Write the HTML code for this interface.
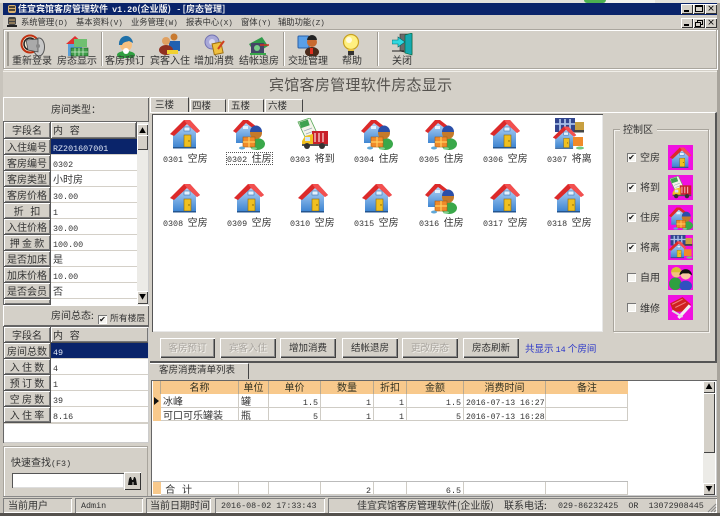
<!DOCTYPE html>
<html><head><meta charset="utf-8"><style>
html,body{margin:0;padding:0;width:720px;height:516px;overflow:hidden;background:#d4d0c8}
*{box-sizing:border-box}
body{position:relative;font-family:"Noto Sans CJK SC","WenQuanYi Zen Hei",sans-serif;font-size:10px;color:#333;line-height:1;filter:blur(.3px)}
div,span.a,svg.a{position:absolute}
.t{white-space:nowrap}
.m{font-family:"Liberation Mono",monospace;font-size:8.4px}
.r{box-shadow:inset 1px 1px 0 #fff,inset -1px -1px 0 #666;background:#d4d0c8}
.s{box-shadow:inset 1px 1px 0 #808080,inset -1px -1px 0 #fff;background:#d4d0c8}
.h{background:#d4d0c8;box-shadow:inset 1px 1px 0 #fff,inset -1px -1px 0 #777;text-align:center;padding-top:3px;white-space:nowrap;border-right:1px solid #555;border-bottom:1px solid #555}
.v{background:#fff;padding:3px 0 0 2px;white-space:nowrap;border-bottom:1px solid #d4d0c8}
.sel{background:#0a246a;color:#dfe6f5}
.o{background:#f8c98c;text-align:center;padding-top:1px;border-right:1px solid #b9a98f;height:13px;top:381px;color:#332}
.g{background:#fff;white-space:nowrap;padding:2px 2px 0;height:14px;border-right:1px solid #cfccc5;border-bottom:1px solid #cfccc5;color:#333}
.ri{text-align:right}
.btn{top:338px;height:20px;background:#d4d0c8;box-shadow:inset 1px 1px 0 #fff,inset -1px -1px 0 #404040,inset -2px -2px 0 #888;text-align:center;padding-top:5px;white-space:nowrap;font-size:9.5px}
.dis{color:#aaa6a0;text-shadow:1px 1px 0 #f4f2ee}
.cb{width:9px;height:9px;background:#f5f4f0;box-shadow:inset 1px 1px 0 #777,inset -1px -1px 0 #fff;font-size:8px;line-height:9px;text-align:center;color:#111}
.mg{width:25px;height:25px;background:#f010e0;left:668px}
.sb{width:10px;height:10px;background:#d4d0c8;box-shadow:inset 1px 1px 0 #fff,inset -1px -1px 0 #444}
.cap{width:12px;height:10px;top:4px;background:#d4d0c8;box-shadow:inset 1px 1px 0 #fff,inset -1px -1px 0 #333;font-size:8px;line-height:10px;text-align:center;color:#000}
.cap i{position:absolute;display:block}
</style></head><body>
<svg width="0" height="0" style="position:absolute"><defs>
<linearGradient id="w" x1="0" y1="0" x2="0" y2="1"><stop offset="0" stop-color="#b8d8f8"/><stop offset="1" stop-color="#3f86d2"/></linearGradient>
<symbol id="house" viewBox="0 0 32 32"><polygon points="4,14 18,5 27,14 27,29 4,29" fill="url(#w)"/><polygon points="1,16 15,2 21,2 31,13 28,15 18,6 5,18" fill="#dc2a2a"/><polygon points="15,2 21,2 31,13 28,15 18,6" fill="#f25050"/><rect x="15" y="9" width="6" height="4" fill="#e4f2ff" stroke="#3a70b0" stroke-width=".6"/><rect x="15" y="17" width="7" height="12" fill="#f0c020" stroke="#8a6a10" stroke-width=".6"/><circle cx="20" cy="23" r=".7" fill="#7a5a00"/><rect x="4" y="29" width="23" height="1.5" fill="#24558f"/></symbol>
<symbol id="guest" viewBox="0 0 32 32"><polygon points="3,12 13,4 22,11 22,25 3,25" fill="url(#w)"/><polygon points="0,13 10,2 15,2 24,9 21,11 13,5 3,15" fill="#dc2a2a"/><rect x="10" y="8" width="5" height="3" fill="#e4f2ff"/><ellipse cx="24" cy="26" rx="8" ry="6" fill="#3aa84a"/><circle cx="23" cy="15" r="6" fill="#c47a2a"/><path d="M17,14a6,6.500 0 0 1 12,0z" fill="#2b4fa8"/><rect x="10" y="19" width="12" height="10" fill="#f08a2a" stroke="#a85a10" stroke-width=".6"/><path d="M16,19v10M10,24h12" stroke="#ffd060" stroke-width="1.2"/><ellipse cx="9" cy="30" rx="3" ry="1.500" fill="#60a8d8"/><ellipse cx="21" cy="30.500" rx="3" ry="1.200" fill="#80d090"/></symbol>
<symbol id="truck" viewBox="0 0 32 32"><polygon points="1,4 13,0 20,15 8,19" fill="#f4f4ea" stroke="#58a858" stroke-width=".8"/><rect x="3" y="3" width="9" height="6" fill="#3fa24f" transform="rotate(-18 7 6)"/><path d="M7,13l8,-3M9,16l8,-3" stroke="#9ab" stroke-width=".8"/><rect x="15" y="13" width="16" height="13" fill="#c8202a"/><path d="M18,15v9M22,15v9M26,15v9" stroke="#f6d0d0" stroke-width="1.300"/><polygon points="8,18 16,16 16,28 5,28 5,23" fill="#f0c020"/><rect x="8" y="19" width="5" height="4" fill="#cfe4f8"/><rect x="5" y="26" width="26" height="2" fill="#555"/><circle cx="10" cy="28" r="3" fill="#333"/><circle cx="25" cy="28" r="3" fill="#333"/></symbol>
<symbol id="leave" viewBox="0 0 32 32"><rect x="2" y="0" width="20" height="14" fill="#32458e"/><path d="M7,1v12M12,1v12M17,1v12M2,6h20" stroke="#a8c0e8" stroke-width="1.800"/><rect x="22" y="4" width="9" height="9" fill="#c8a040"/><rect x="21" y="12" width="10" height="2.500" fill="#444"/><use href="#house" x="-1" y="7" width="25" height="25"/><rect x="20" y="19" width="10" height="9" fill="#f08a2a"/><ellipse cx="27" cy="30" rx="4" ry="1.500" fill="#70c880"/></symbol>
<symbol id="self" viewBox="0 0 24 24"><circle cx="8" cy="7" r="5" fill="#f4c080"/><path d="M3,7a5,5 0 0 1 10,0z" fill="#d8c030"/><ellipse cx="7" cy="18" rx="6" ry="6" fill="#2fa040"/><circle cx="17" cy="9" r="5" fill="#f6c8a0"/><path d="M11,10a6,6 0 0 1 12,0l-3,-2h-6z" fill="#111"/><ellipse cx="17" cy="20" rx="6" ry="5" fill="#3050c0"/></symbol>
<symbol id="fix" viewBox="0 0 24 24"><polygon points="2,8 14,2 22,9 14,16 5,16" fill="#d02020"/><path d="M4,9l10,-5M7,12l10,-5" stroke="#f08080"/><path d="M10,22L21,10" stroke="#f0f0f0" stroke-width="3"/><path d="M4,15l10,6" stroke="#e0e0e0" stroke-width="2"/></symbol>
</defs></svg>

<!-- top strip / title -->
<div style="left:0;top:0;width:720px;height:3px;background:#e4e2dc"></div>
<div style="left:585px;top:0;width:70px;height:3px;background:#f2f2ee"></div>
<div style="left:584px;top:0;width:22px;height:3px;background:#4cb050;border-radius:0 0 10px 10px"></div>
<div style="left:0;top:3px;width:3px;height:513px;background:#c8c4bc"></div>
<div style="left:717px;top:3px;width:3px;height:513px;background:#a8a49c"></div>
<div style="left:3px;top:3px;width:714px;height:12px;background:#0a246a"></div>
<svg class="a" style="left:7px;top:4px" width="10" height="10" viewBox="0 0 10 10"><rect x="1" y="1" width="8" height="8" rx="2" fill="#d8b070"/><path d="M2,3h6M2,6h6" stroke="#222" stroke-width="1.400"/></svg>
<div class="t" style="left:18px;top:4px;color:#f2f2f2;font-weight:bold;font-size:9px">佳宜宾馆客房管理软件&nbsp; <span class="m" style="font-weight:bold">v1.20</span>(企业版)&nbsp;&nbsp; - [房态管理]</div>
<div class="cap" style="left:681px"><i style="left:3px;top:6px;width:5px;height:2px;background:#000"></i></div>
<div class="cap" style="left:693px"><i style="left:2px;top:1px;width:8px;height:7px;border:1px solid #000;border-top-width:2px"></i></div>
<div class="cap" style="left:705px;font-weight:bold">×</div>

<!-- menu -->
<svg class="a" style="left:6px;top:16px" width="12" height="12" viewBox="0 0 12 12"><rect x="2" y="1" width="8" height="8" rx="2" fill="#444"/><path d="M3,4h6M3,7h6" stroke="#d8b070"/><rect x="1" y="9" width="10" height="2" fill="#222"/></svg>
<div class="t" style="left:21px;top:18px;font-size:8.3px">系统管理<span class="m" style="font-size:7.5px">(D)</span></div>
<div class="t" style="left:76px;top:18px;font-size:8.3px">基本资料<span class="m" style="font-size:7.5px">(V)</span></div>
<div class="t" style="left:131px;top:18px;font-size:8.3px">业务管理<span class="m" style="font-size:7.5px">(W)</span></div>
<div class="t" style="left:186px;top:18px;font-size:8.3px">报表中心<span class="m" style="font-size:7.5px">(X)</span></div>
<div class="t" style="left:241px;top:18px;font-size:8.3px">窗体<span class="m" style="font-size:7.5px">(Y)</span></div>
<div class="t" style="left:278px;top:18px;font-size:8.3px">辅助功能<span class="m" style="font-size:7.5px">(Z)</span></div>
<div class="cap" style="left:681px;top:18px"><i style="left:3px;top:6px;width:5px;height:2px;background:#000"></i></div>
<div class="cap" style="left:693px;top:18px"><i style="left:4px;top:2px;width:6px;height:5px;border:1px solid #000"></i><i style="left:2px;top:4px;width:6px;height:5px;border:1px solid #000;background:#d4d0c8"></i></div>
<div class="cap" style="left:705px;top:18px;font-weight:bold">×</div>

<!-- toolbar -->
<div style="left:3px;top:29px;width:714px;height:40px;border:1px solid #aaa69e;box-shadow:inset 1px 1px 0 #fff,1px 1px 0 #fff"></div>
<div style="left:7px;top:32px;width:2px;height:34px;background:#a09c94"></div>
<div style="left:101px;top:32px;width:2px;height:34px;background:#a09c94;border-right:1px solid #fff"></div>
<div style="left:283px;top:32px;width:2px;height:34px;background:#a09c94;border-right:1px solid #fff"></div>
<div style="left:377px;top:32px;width:2px;height:34px;background:#a09c94;border-right:1px solid #fff"></div>
<svg class="a" style="left:20px;top:33px" width="26" height="24" viewBox="0 0 26 24"><circle cx="10" cy="11" r="8.500" fill="#f4e8d0" stroke="#c03010" stroke-width="2"/><circle cx="10" cy="11" r="6" fill="none" stroke="#222" stroke-width="1.500"/><ellipse cx="19" cy="14" rx="5.500" ry="9" fill="#c8c8c8" stroke="#555"/><polygon points="6,7 18,6 18,19 8,17" fill="#aaa" stroke="#444" stroke-width=".7"/><circle cx="18" cy="13" r="2" fill="#888"/></svg>
<svg class="a" style="left:65px;top:35px" width="24" height="22" viewBox="0 0 24 22"><polygon points="1,9 10,1 19,9" fill="#e03030"/><rect x="3" y="9" width="14" height="12" fill="#5aa0d8"/><rect x="9" y="4" width="13" height="8" fill="#70c070"/><rect x="6" y="13" width="17" height="8" fill="#3f9c48" stroke="#1d5c24" stroke-width=".6"/><path d="M10,13v8M14,13v8M18,13v8M6,17h17" stroke="#cfeccf" stroke-width=".8"/></svg>
<svg class="a" style="left:116px;top:34px" width="20" height="24" viewBox="0 0 20 24"><ellipse cx="10" cy="21" rx="9" ry="4" fill="#2fa040"/><circle cx="10" cy="11" r="6" fill="#f6c080"/><path d="M3,11a7,8 0 0 1 14,-2l-4,-2c-3,1 -6,1 -7,4z" fill="#1f70a8"/><circle cx="10" cy="17" r="3" fill="#fff"/></svg>
<svg class="a" style="left:159px;top:33px" width="22" height="22" viewBox="0 0 22 22"><circle cx="15" cy="4" r="3.500" fill="#c87a30"/><rect x="10" y="8" width="11" height="10" fill="#2060b0"/><circle cx="7" cy="8" r="4" fill="#e0a060"/><ellipse cx="7" cy="17" rx="7" ry="5" fill="#903020"/><rect x="8" y="17" width="11" height="4" fill="#f0d030"/></svg>
<svg class="a" style="left:204px;top:34px" width="22" height="22" viewBox="0 0 22 22"><circle cx="8" cy="8" r="7" fill="#a8a8d8" stroke="#7070b0"/><circle cx="8" cy="8" r="3" fill="#d8d8f0"/><rect x="9" y="9" width="9" height="11" fill="#f0c040" stroke="#a07010" transform="rotate(-12 13 14)"/><path d="M14,15l6,-8" stroke="#d04020" stroke-width="2"/></svg>
<svg class="a" style="left:248px;top:36px" width="22" height="20" viewBox="0 0 22 20"><polygon points="1,8 14,1 20,10 7,18" fill="#2f9a4a"/><rect x="3" y="7" width="13" height="10" fill="#446"/><circle cx="9" cy="12" r="3" fill="#7c8"/><path d="M12,9h9" stroke="#d03020" stroke-width="1.500"/><rect x="2" y="17" width="16" height="2" fill="#3aa84a"/></svg>
<svg class="a" style="left:297px;top:34px" width="24" height="22" viewBox="0 0 24 22"><rect x="1" y="2" width="11" height="12" rx="1" fill="#5aa0e8" stroke="#2a60a8"/><ellipse cx="15" cy="18" rx="7" ry="5" fill="#4a2a1a"/><circle cx="15" cy="8" r="5" fill="#c86a30"/><path d="M10,6a5,5 0 0 1 10,0z" fill="#222"/><rect x="13" y="14" width="3" height="6" fill="#e03020"/></svg>
<svg class="a" style="left:342px;top:33px" width="18" height="24" viewBox="0 0 18 24"><circle cx="9" cy="9" r="7.500" fill="#fff080" stroke="#c8a020" stroke-width="1.200"/><circle cx="7" cy="7" r="3" fill="#fffbe0"/><rect x="6" y="16" width="6" height="2" fill="#e8c040"/><rect x="6" y="18" width="6" height="4" fill="#333"/></svg>
<svg class="a" style="left:392px;top:33px" width="21" height="23" viewBox="0 0 21 23"><polygon points="8,1 20,1 20,21 8,18" fill="#6a6a6a" stroke="#333" stroke-width=".6"/><polygon points="13,2 20,0 20,22 13,20" fill="#16a8b0" stroke="#063" stroke-width=".6"/><path d="M0,18h12" stroke="#222"/><polygon points="0,7 6,7 6,4 13,9 6,14 6,11 0,11" fill="#30d8e0" stroke="#066" stroke-width=".6"/></svg>
<div class="t" style="left:12px;top:55px">重新登录</div>
<div class="t" style="left:57px;top:55px">房态显示</div>
<div class="t" style="left:105px;top:55px">客房预订</div>
<div class="t" style="left:150px;top:55px">宾客入住</div>
<div class="t" style="left:194px;top:55px">增加消费</div>
<div class="t" style="left:239px;top:55px">结帐退房</div>
<div class="t" style="left:288px;top:55px">交班管理</div>
<div class="t" style="left:342px;top:55px">帮助</div>
<div class="t" style="left:392px;top:55px">关闭</div>
<div style="left:3px;top:71px;width:714px;height:1px;background:#f0eee8"></div>
<div class="t" style="left:269px;top:77px;font-size:15px;letter-spacing:.28px;color:#55524e">宾馆客房管理软件房态显示</div>

<!-- left panel 1 -->
<div class="r" style="left:3px;top:97px;width:146px;height:25px"></div>
<div class="t" style="left:51px;top:104px">房间类型：</div>
<div style="left:3px;top:121px;width:146px;height:184px;background:#fff;box-shadow:inset 1px 1px 0 #666,inset -1px 0 0 #ccc"></div>
<div class="h" style="left:4px;top:122px;width:47px;height:17px">字段名</div><div class="h" style="left:51px;top:122px;width:86px;height:17px;text-align:left;padding-left:2px">内&nbsp;&nbsp;&nbsp;容</div>
<div class="h" style="left:4px;top:139px;width:47px;height:16px">入住编号</div><div class="v sel" style="left:51px;top:139px;width:86px;height:16px"><span class="m">RZ201607001</span></div>
<div class="h" style="left:4px;top:155px;width:47px;height:16px">客房编号</div><div class="v" style="left:51px;top:155px;width:86px;height:16px"><span class="m">0302</span></div>
<div class="h" style="left:4px;top:171px;width:47px;height:16px">客房类型</div><div class="v" style="left:51px;top:171px;width:86px;height:16px">小时房</div>
<div class="h" style="left:4px;top:187px;width:47px;height:16px">客房价格</div><div class="v" style="left:51px;top:187px;width:86px;height:16px"><span class="m">30.00</span></div>
<div class="h" style="left:4px;top:203px;width:47px;height:16px">折&nbsp;&nbsp;&nbsp;扣</div><div class="v" style="left:51px;top:203px;width:86px;height:16px"><span class="m">1</span></div>
<div class="h" style="left:4px;top:219px;width:47px;height:16px">入住价格</div><div class="v" style="left:51px;top:219px;width:86px;height:16px"><span class="m">30.00</span></div>
<div class="h" style="left:4px;top:235px;width:47px;height:16px">押 金 款</div><div class="v" style="left:51px;top:235px;width:86px;height:16px"><span class="m">100.00</span></div>
<div class="h" style="left:4px;top:251px;width:47px;height:16px">是否加床</div><div class="v" style="left:51px;top:251px;width:86px;height:16px">是</div>
<div class="h" style="left:4px;top:267px;width:47px;height:16px">加床价格</div><div class="v" style="left:51px;top:267px;width:86px;height:16px"><span class="m">10.00</span></div>
<div class="h" style="left:4px;top:283px;width:47px;height:16px">是否会员</div><div class="v" style="left:51px;top:283px;width:86px;height:16px">否</div>
<div class="h" style="left:4px;top:299px;width:47px;height:6px;padding:0"></div>
<div style="left:137px;top:122px;width:11px;height:183px;background:#ecebe7"></div>
<div class="sb" style="left:137px;top:124px;width:11px;height:14px;font-size:7px;text-align:center;line-height:14px;color:#000">▲</div>
<div class="sb" style="left:137px;top:135px;width:11px;height:15px"></div>
<div class="sb" style="left:137px;top:291px;width:11px;height:13px;font-size:7px;text-align:center;line-height:13px;color:#000">▼</div>

<!-- left panel 2 -->
<div class="r" style="left:3px;top:305px;width:146px;height:21px"></div>
<div class="t" style="left:51px;top:310px">房间总态:</div>
<div class="cb" style="left:98px;top:315px">✔</div>
<div class="t" style="left:110px;top:314px;font-size:8.8px">所有楼层</div>
<div style="left:3px;top:326px;width:146px;height:117px;background:#fff;box-shadow:inset 1px 1px 0 #666,inset -1px -1px 0 #ccc"></div>
<div class="h" style="left:4px;top:327px;width:47px;height:16px">字段名</div><div class="h" style="left:51px;top:327px;width:97px;height:16px;text-align:left;padding-left:2px;border-right:0">内&nbsp;&nbsp;&nbsp;容</div>
<div class="h" style="left:4px;top:343px;width:47px;height:16px">房间总数</div><div class="v sel" style="left:51px;top:343px;width:97px;height:16px"><span class="m">49</span></div>
<div class="h" style="left:4px;top:359px;width:47px;height:16px">入 住 数</div><div class="v" style="left:51px;top:359px;width:97px;height:16px"><span class="m">4</span></div>
<div class="h" style="left:4px;top:375px;width:47px;height:16px">预 订 数</div><div class="v" style="left:51px;top:375px;width:97px;height:16px"><span class="m">1</span></div>
<div class="h" style="left:4px;top:391px;width:47px;height:16px">空 房 数</div><div class="v" style="left:51px;top:391px;width:97px;height:16px"><span class="m">39</span></div>
<div class="h" style="left:4px;top:407px;width:47px;height:16px">入 住 率</div><div class="v" style="left:51px;top:407px;width:97px;height:16px"><span class="m">8.16</span></div>
<div style="left:4px;top:423px;width:144px;height:1px;background:#d4d0c8"></div>

<div style="left:3px;top:446px;width:145px;height:51px;border:1px solid #a8a49c;box-shadow:inset 1px 1px 0 #fff"></div>
<div class="t" style="left:11px;top:457px">快速查找<span class="m">(F3)</span></div>
<div style="left:12px;top:473px;width:112px;height:15px;background:#fff;box-shadow:inset 1px 1px 0 #555,inset -1px -1px 0 #ddd"></div>
<div class="r" style="left:124px;top:472px;width:17px;height:18px;box-shadow:inset 1px 1px 0 #fff,inset -1px -1px 0 #333"></div>
<svg class="a" style="left:127px;top:476px" width="11" height="10" viewBox="0 0 11 10"><path d="M1,9l1,-6 1,-2h1l1,3h1l1,-3h1l1,2 1,6h-3.500v-3h-1v3z" fill="#111"/></svg>

<!-- tabs -->
<div style="left:150px;top:97px;width:39px;height:16px;background:#d4d0c8;border-top:1px solid #fff;border-left:1px solid #fff;border-right:1px solid #444"></div>
<div class="t" style="left:155px;top:100px;font-size:9.5px">三楼</div>
<div style="left:190px;top:99px;width:36px;height:14px;border-top:1px solid #fff;border-left:1px solid #fff;border-right:1px solid #444"></div><div class="t" style="left:192px;top:101px;font-size:9.5px">四楼</div>
<div style="left:228px;top:99px;width:36px;height:14px;border-top:1px solid #fff;border-left:1px solid #fff;border-right:1px solid #444"></div><div class="t" style="left:231px;top:101px;font-size:9.5px">五楼</div>
<div style="left:265px;top:99px;width:38px;height:14px;border-top:1px solid #fff;border-left:1px solid #fff;border-right:1px solid #444"></div><div class="t" style="left:268px;top:101px;font-size:9.5px">六楼</div>

<!-- main frame -->
<div style="left:150px;top:112px;width:567px;height:251px;border-right:2px solid #555;border-bottom:2px solid #555;border-top:1px solid #fff"></div>
<div style="left:152px;top:114px;width:451px;height:218px;background:#fff;box-shadow:inset 1px 1px 0 #555,inset -1px -1px 0 #e8e8e8"></div>

<!-- rooms -->
<svg class="a" style="left:169px;top:118px" width="32" height="32"><use href="#house" width="32" height="32"/></svg><div class="t" style="left:163px;top:153px"><span class="m">0301</span>&nbsp;&nbsp;空房</div>
<div style="left:226px;top:152px;width:47px;height:13px;border:1px dotted #555"></div>
<svg class="a" style="left:233px;top:118px" width="32" height="32"><use href="#guest" width="32" height="32"/></svg><div class="t" style="left:227px;top:153px"><span class="m">0302</span>&nbsp;&nbsp;住房</div>
<svg class="a" style="left:297px;top:118px" width="32" height="32"><use href="#truck" width="32" height="32"/></svg><div class="t" style="left:290px;top:153px"><span class="m">0303</span>&nbsp;&nbsp;将到</div>
<svg class="a" style="left:361px;top:118px" width="32" height="32"><use href="#guest" width="32" height="32"/></svg><div class="t" style="left:354px;top:153px"><span class="m">0304</span>&nbsp;&nbsp;住房</div>
<svg class="a" style="left:425px;top:118px" width="32" height="32"><use href="#guest" width="32" height="32"/></svg><div class="t" style="left:419px;top:153px"><span class="m">0305</span>&nbsp;&nbsp;住房</div>
<svg class="a" style="left:489px;top:118px" width="32" height="32"><use href="#house" width="32" height="32"/></svg><div class="t" style="left:483px;top:153px"><span class="m">0306</span>&nbsp;&nbsp;空房</div>
<svg class="a" style="left:553px;top:118px" width="32" height="32"><use href="#leave" width="32" height="32"/></svg><div class="t" style="left:547px;top:153px"><span class="m">0307</span>&nbsp;&nbsp;将离</div>

<svg class="a" style="left:169px;top:182px" width="32" height="32"><use href="#house" width="32" height="32"/></svg><div class="t" style="left:163px;top:217px"><span class="m">0308</span>&nbsp;&nbsp;空房</div>
<svg class="a" style="left:233px;top:182px" width="32" height="32"><use href="#house" width="32" height="32"/></svg><div class="t" style="left:227px;top:217px"><span class="m">0309</span>&nbsp;&nbsp;空房</div>
<svg class="a" style="left:297px;top:182px" width="32" height="32"><use href="#house" width="32" height="32"/></svg><div class="t" style="left:290px;top:217px"><span class="m">0310</span>&nbsp;&nbsp;空房</div>
<svg class="a" style="left:361px;top:182px" width="32" height="32"><use href="#house" width="32" height="32"/></svg><div class="t" style="left:354px;top:217px"><span class="m">0315</span>&nbsp;&nbsp;空房</div>
<svg class="a" style="left:425px;top:182px" width="32" height="32"><use href="#guest" width="32" height="32"/></svg><div class="t" style="left:419px;top:217px"><span class="m">0316</span>&nbsp;&nbsp;住房</div>
<svg class="a" style="left:489px;top:182px" width="32" height="32"><use href="#house" width="32" height="32"/></svg><div class="t" style="left:483px;top:217px"><span class="m">0317</span>&nbsp;&nbsp;空房</div>
<svg class="a" style="left:553px;top:182px" width="32" height="32"><use href="#house" width="32" height="32"/></svg><div class="t" style="left:547px;top:217px"><span class="m">0318</span>&nbsp;&nbsp;空房</div>

<!-- control -->
<div style="left:613px;top:129px;width:96px;height:203px;border:1px solid #a8a49c;box-shadow:inset 1px 1px 0 #f4f2ee,1px 1px 0 #f4f2ee"></div>
<div class="t" style="left:620px;top:123px;background:#d4d0c8;padding:0 4px 0 3px;height:12px;line-height:12px">控制区</div>
<div class="cb" style="left:627px;top:153px">✔</div><div class="t" style="left:640px;top:152px">空房</div><div class="mg" style="top:145px"><svg width="25" height="25" style="display:block"><use href="#house" x="1" y="1" width="23" height="23"/></svg></div>
<div class="cb" style="left:627px;top:183px">✔</div><div class="t" style="left:640px;top:182px">将到</div><div class="mg" style="top:175px"><svg width="25" height="25" style="display:block"><use href="#truck" x="1" y="1" width="23" height="23"/></svg></div>
<div class="cb" style="left:627px;top:213px">✔</div><div class="t" style="left:640px;top:212px">住房</div><div class="mg" style="top:205px"><svg width="25" height="25" style="display:block"><use href="#guest" x="1" y="1" width="24" height="24"/></svg></div>
<div class="cb" style="left:627px;top:243px">✔</div><div class="t" style="left:640px;top:242px">将离</div><div class="mg" style="top:235px"><svg width="25" height="25" style="display:block"><use href="#leave" x="1" y="0" width="24" height="24"/></svg></div>
<div class="cb" style="left:627px;top:273px"></div><div class="t" style="left:640px;top:272px">自用</div><div class="mg" style="top:265px"><svg width="25" height="25" style="display:block"><use href="#self" width="25" height="25"/></svg></div>
<div class="cb" style="left:627px;top:303px"></div><div class="t" style="left:640px;top:303px">维修</div><div class="mg" style="top:295px"><svg width="25" height="25" style="display:block"><use href="#fix" width="25" height="25"/></svg></div>

<!-- buttons -->
<div class="btn dis" style="left:160px;width:55px">客房预订</div>
<div class="btn dis" style="left:220px;width:56px">宾客入住</div>
<div class="btn" style="left:280px;width:56px">增加消费</div>
<div class="btn" style="left:342px;width:56px">结帐退房</div>
<div class="btn dis" style="left:402px;width:56px">更改房态</div>
<div class="btn" style="left:463px;width:56px">房态刷新</div>
<div class="t" style="left:525px;top:344px;color:#2a36c8;font-size:9.5px">共显示&nbsp;<span class="m">14</span>&nbsp;个房间</div>

<!-- bottom tab -->
<div style="left:150px;top:363px;width:99px;height:16px;border-top:1px solid #fff;border-right:1px solid #444"></div>
<div class="t" style="left:159px;top:365px;font-size:9.5px">客房消费清单列表</div>

<!-- bottom grid -->
<div style="left:151px;top:380px;width:566px;height:116px;background:#fff;box-shadow:inset 1px 1px 0 #666,inset -1px -1px 0 #ccc"></div>
<div class="o" style="left:153px;width:8px"></div>
<div class="o" style="left:161px;width:78px">名称</div>
<div class="o" style="left:239px;width:30px">单位</div>
<div class="o" style="left:269px;width:52px">单价</div>
<div class="o" style="left:321px;width:53px">数量</div>
<div class="o" style="left:374px;width:33px">折扣</div>
<div class="o" style="left:407px;width:57px">金额</div>
<div class="o" style="left:464px;width:82px">消费时间</div>
<div class="o" style="left:546px;width:82px;border-right:0">备注</div>

<div style="left:153px;top:394px;width:8px;height:27px;background:#f8c98c"></div>
<div style="left:154px;top:397px;width:0;height:0;border-left:5px solid #111;border-top:4px solid transparent;border-bottom:4px solid transparent"></div>
<div class="g" style="left:161px;top:394px;width:78px">冰峰</div>
<div class="g" style="left:239px;top:394px;width:30px">罐</div>
<div class="g ri" style="left:269px;top:394px;width:52px"><span class="m">1.5</span></div>
<div class="g ri" style="left:321px;top:394px;width:53px"><span class="m">1</span></div>
<div class="g ri" style="left:374px;top:394px;width:33px"><span class="m">1</span></div>
<div class="g ri" style="left:407px;top:394px;width:57px"><span class="m">1.5</span></div>
<div class="g" style="left:464px;top:394px;width:82px"><span class="m" style="font-size:8.2px">2016-07-13 16:27</span></div>
<div class="g" style="left:546px;top:394px;width:82px"></div>

<div class="g" style="left:161px;top:408px;width:78px;height:13px">可口可乐罐装</div>
<div class="g" style="left:239px;top:408px;width:30px;height:13px">瓶</div>
<div class="g ri" style="left:269px;top:408px;width:52px;height:13px"><span class="m">5</span></div>
<div class="g ri" style="left:321px;top:408px;width:53px;height:13px"><span class="m">1</span></div>
<div class="g ri" style="left:374px;top:408px;width:33px;height:13px"><span class="m">1</span></div>
<div class="g ri" style="left:407px;top:408px;width:57px;height:13px"><span class="m">5</span></div>
<div class="g" style="left:464px;top:408px;width:82px;height:13px"><span class="m" style="font-size:8.2px">2016-07-13 16:28</span></div>
<div class="g" style="left:546px;top:408px;width:82px;height:13px"></div>

<div style="left:153px;top:481px;width:475px;height:1px;background:#bbb"></div>
<div style="left:153px;top:482px;width:8px;height:12px;background:#f8c98c"></div>
<div class="g" style="left:161px;top:482px;width:78px;height:13px">&nbsp;合&nbsp;&nbsp;&nbsp;计</div>
<div class="g" style="left:239px;top:482px;width:30px;height:13px"></div>
<div class="g" style="left:269px;top:482px;width:52px;height:13px"></div>
<div class="g ri" style="left:321px;top:482px;width:53px;height:13px"><span class="m">2</span></div>
<div class="g" style="left:374px;top:482px;width:33px;height:13px"></div>
<div class="g ri" style="left:407px;top:482px;width:57px;height:13px"><span class="m">6.5</span></div>
<div class="g" style="left:464px;top:482px;width:82px;height:13px"></div>
<div class="g" style="left:546px;top:482px;width:82px;height:13px"></div>

<div style="left:703px;top:381px;width:12px;height:114px;background:#ecebe7"></div>
<div class="sb" style="left:703px;top:381px;width:12px;height:12px;font-size:7px;text-align:center;line-height:12px;color:#000">▲</div>
<div class="sb" style="left:703px;top:393px;width:12px;height:60px"></div>
<div class="sb" style="left:703px;top:483px;width:12px;height:12px;font-size:7px;text-align:center;line-height:12px;color:#000">▼</div>

<!-- status -->
<div style="left:3px;top:496px;width:714px;height:1px;background:#888"></div>
<div class="s" style="left:3px;top:498px;width:69px;height:15px"></div><div class="t" style="left:8px;top:500px">当前用户</div>
<div class="s" style="left:75px;top:498px;width:68px;height:15px"></div><div class="t m" style="left:81px;top:502px">Admin</div>
<div class="s" style="left:146px;top:498px;width:65px;height:15px"></div><div class="t" style="left:150px;top:500px">当前日期时间</div>
<div class="s" style="left:215px;top:498px;width:110px;height:15px"></div><div class="t m" style="left:221px;top:502px">2016-08-02 17:33:43</div>
<div class="s" style="left:328px;top:498px;width:389px;height:15px"></div>
<div class="t" style="left:357px;top:500px">佳宜宾馆客房管理软件(企业版)</div>
<div class="t" style="left:504px;top:500px">联系电话:</div>
<div class="t m" style="left:558px;top:502px">029-86232425&nbsp;&nbsp;OR&nbsp;&nbsp;13072908445</div>
<svg class="a" style="left:707px;top:503px" width="10" height="10" viewBox="0 0 10 10"><path d="M9,1L1,9M9,4L4,9M9,7L7,9" stroke="#888"/></svg>
<div style="left:0;top:513px;width:720px;height:3px;background:#55524e"></div>
</body></html>
